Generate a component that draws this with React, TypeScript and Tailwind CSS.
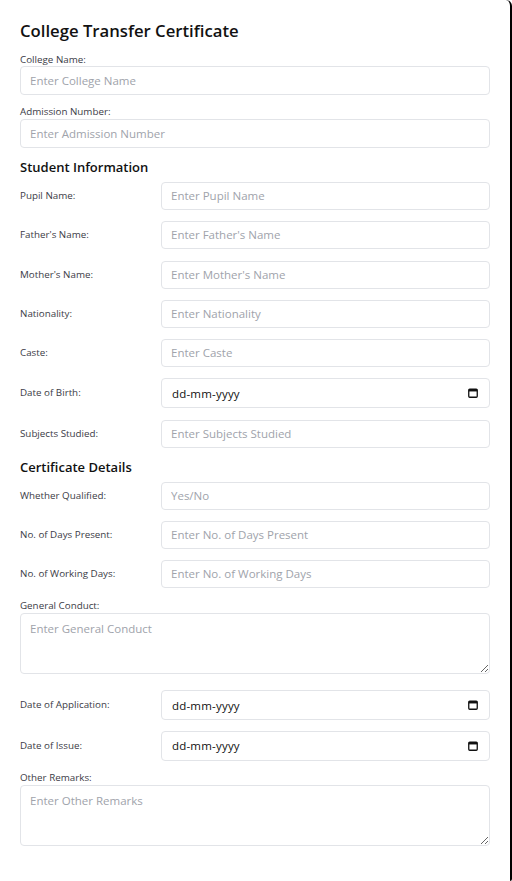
import React from "react";

const font = { fontFamily: "'Open Sans', 'Noto Sans', sans-serif" };

const inputCls =
  "block w-full h-[28px] rounded-[4px] border border-[#e2e4e8] bg-white pl-[9px] pr-[10px] pb-[1px] text-[11.5px] text-[#111] placeholder:text-[#a0a3ab] outline-none";
const areaCls =
  "block w-full h-[61px] rounded-[4px] border border-[#e2e4e8] bg-white pl-[9px] pr-[10px] py-[6px] text-[11.5px] text-[#111] placeholder:text-[#a0a3ab] outline-none";
const labelCls = "text-[9.8px] leading-[12px] text-[#3b3b46]";

function DateField() {
  return (
    <div className="flex w-full h-[30px] items-center justify-between rounded-[4px] border border-[#e2e4e8] bg-white pl-[10px] pr-[11px]">
      <span className="text-[11.5px] text-[#111] tracking-[0.2px]">dd-mm-yyyy</span>
      <svg width="10" height="10" viewBox="0 0 10 10" fill="none">
        <rect x="0.75" y="1.25" width="8.5" height="8" rx="1" stroke="#111" strokeWidth="1.3" />
        <rect x="0.75" y="1.25" width="8.5" height="2.2" fill="#111" />
      </svg>
    </div>
  );
}

function Row({ label, placeholder, date }: { label: string; placeholder?: string; date?: boolean }) {
  return (
    <div className="flex items-center">
      <label className={"w-[141px] shrink-0 " + labelCls}>{label}</label>
      {date ? (
        <DateField />
      ) : (
        <input type="text" placeholder={placeholder} className={inputCls} style={font} />
      )}
    </div>
  );
}

export default function App() {
  return (
    <div className="w-[512px] h-[881px] bg-white" style={font}>
      <div className="w-[512px] h-[881px] border-r-2 border-black rounded-tr-[6px] rounded-br-[2px] pl-[20px] pr-[20px] pt-[17px]">
        <h2 className="text-[16.7px] leading-[28px] font-semibold text-[#111] mb-[9px]">College Transfer Certificate</h2>

        <label className={"block " + labelCls}>College Name:</label>
        <input type="text" placeholder="Enter College Name" className={inputCls + " h-[29px]"} style={font} />

        <label className={"block mt-[11px] mb-[1px] " + labelCls}>Admission Number:</label>
        <input type="text" placeholder="Enter Admission Number" className={inputCls + " h-[29px]"} style={font} />

        <h3 className="mt-[9px] mb-[5px] text-[13px] leading-[20px] font-semibold text-[#111]">Student Information</h3>
        <div className="flex flex-col gap-[11.3px]">
          <Row label="Pupil Name:" placeholder="Enter Pupil Name" />
          <Row label="Father's Name:" placeholder="Enter Father's Name" />
          <Row label="Mother's Name:" placeholder="Enter Mother's Name" />
          <Row label="Nationality:" placeholder="Enter Nationality" />
          <Row label="Caste:" placeholder="Enter Caste" />
          <Row label="Date of Birth:" date />
          <Row label="Subjects Studied:" placeholder="Enter Subjects Studied" />
        </div>

        <h3 className="mt-[9px] mb-[5px] text-[13px] leading-[20px] font-semibold text-[#111]">Certificate Details</h3>
        <div className="flex flex-col gap-[11.3px]">
          <Row label="Whether Qualified:" placeholder="Yes/No" />
          <Row label="No. of Days Present:" placeholder="Enter No. of Days Present" />
          <Row label="No. of Working Days:" placeholder="Enter No. of Working Days" />
        </div>

        <label className={"block mt-[12px] mb-[1px] " + labelCls}>General Conduct:</label>
        <textarea placeholder="Enter General Conduct" className={areaCls} style={font} />

        <div className="flex flex-col gap-[10.5px] mt-[16px]">
          <Row label="Date of Application:" date />
          <Row label="Date of Issue:" date />
        </div>

        <label className={"block mt-[11px] mb-[1px] " + labelCls}>Other Remarks:</label>
        <textarea placeholder="Enter Other Remarks" className={areaCls} style={font} />
      </div>
    </div>
  );
}
